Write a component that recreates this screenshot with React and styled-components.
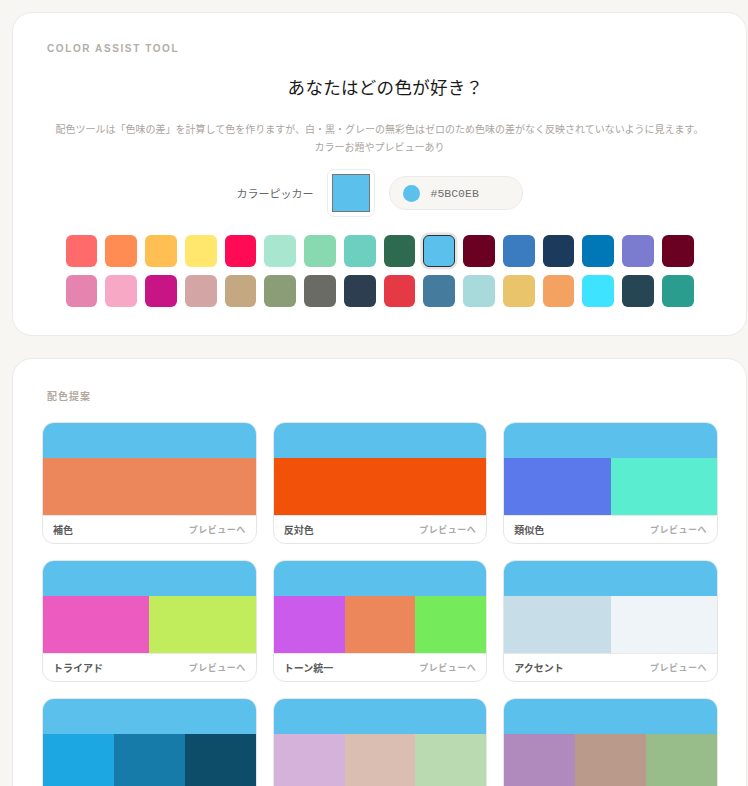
import React from "react";
import styled, { createGlobalStyle } from "styled-components";

const GlobalStyle = createGlobalStyle`
  html, body { margin: 0; padding: 0; background: #f7f6f3; }
  body {
    font-family: "Liberation Sans", "Noto Sans CJK JP", sans-serif;
    color: #333;
    overflow: hidden;
  }
  * { box-sizing: border-box; }
`;

const Page = styled.div`
  display: flex;
  flex-direction: column;
  gap: 22px;
  padding: 12px 1px 12px 12px;
`;

const Card = styled.section`
  background: #fff;
  border: 1px solid #ebeae6;
  border-radius: 20px;
  padding: ${(p) => p.$pad};
`;

const Eyebrow = styled.div`
  font-size: 10px;
  line-height: 12px;
  font-weight: 700;
  letter-spacing: 1.6px;
  color: #b3aea6;
`;

const Title = styled.h1`
  margin: 20px 0 0;
  padding-left: 12px;
  font-size: 17.5px;
  line-height: 24px;
  font-weight: 400;
  letter-spacing: 0.3px;
  text-align: center;
  color: #1a1a1a;
  font-family: "Noto Sans CJK JP", sans-serif;
`;

const Desc = styled.p`
  margin: 21px 0 0;
  font-size: 10px;
  line-height: 18px;
  text-align: center;
  color: #aaa59e;
  font-family: "Noto Sans CJK JP", sans-serif;
`;

const PickerRow = styled.div`
  margin-top: 13px;
  display: flex;
  align-items: center;
  justify-content: center;
  gap: 13px;
`;

const PickerLabel = styled.span`
  font-size: 11px;
  color: #666;
  font-family: "Noto Sans CJK JP", sans-serif;
`;

const PickerBox = styled.div`
  width: 48px;
  height: 48px;
  border: 1px solid #ececec;
  border-radius: 7px;
  padding: 4px;
  display: flex;
`;

const PickerFill = styled.div`
  flex: 1;
  background: ${(p) => p.$c};
  border: 1px solid #767676;
`;

const HexPill = styled.div`
  margin-left: 1px;
  width: 134px;
  height: 34px;
  border-radius: 17px;
  background: #f7f6f3;
  border: 1px solid #ecebe7;
  display: flex;
  align-items: center;
  gap: 11px;
  padding-left: 13px;
`;

const Dot = styled.span`
  width: 17px;
  height: 17px;
  border-radius: 50%;
  background: ${(p) => p.$c};
`;

const HexText = styled.span`
  font-family: "Liberation Mono", monospace;
  font-size: 11.5px;
  color: #707070;
`;

const SwatchGrid = styled.div`
  margin: 18px auto 0;
  width: 628px;
  display: grid;
  grid-template-columns: repeat(16, 1fr);
  grid-auto-rows: 32px;
  gap: 8px;
`;

const Swatch = styled.div`
  border-radius: 6px;
  background: ${(p) => p.$c};
  ${(p) =>
    p.$selected &&
    `
    border: 1.5px solid #2e2e2e;
    box-shadow: 0 0 0 2.5px #e4e4e4;
  `}
`;

const SectionLabel = styled.div`
  padding-left: 5px;
  font-size: 10px;
  line-height: 12px;
  font-weight: 700;
  letter-spacing: 1px;
  color: #b3a89e;
  font-family: "Noto Sans CJK JP", sans-serif;
`;

const PaletteGrid = styled.div`
  margin-top: 20px;
  display: grid;
  grid-template-columns: repeat(3, 1fr);
  gap: 16px;
`;

const PaletteCard = styled.div`
  border: 1px solid #e6e6e6;
  border-radius: 12px;
  overflow: hidden;
  background: #fff;
`;

const TopStripe = styled.div`
  height: 35px;
  background: ${(p) => p.$c};
`;

const Blocks = styled.div`
  height: 57px;
  display: flex;
`;

const Block = styled.div`
  flex: 1;
  background: ${(p) => p.$c};
`;

const Footer = styled.div`
  height: 28px;
  border-top: 1px solid #e8e8e8;
  display: flex;
  align-items: center;
  justify-content: space-between;
  padding: 0 10px;
  font-family: "Noto Sans CJK JP", sans-serif;
`;

const FooterName = styled.span`
  font-size: 10px;
  font-weight: 700;
  color: #5a5a5a;
`;

const FooterLink = styled.span`
  font-size: 9px;
  font-weight: 700;
  letter-spacing: 0.5px;
  color: #aaa;
`;

const PRIMARY = "#5BC0EB";

const swatches = [
  "#FF6B6B", "#FF8C52", "#FFBF52", "#FFE66D", "#FF0A54", "#A8E6CF", "#88D8B0", "#6DCFBF",
  "#2D6A4F", "#5BC0EB", "#6A0022", "#3A7CBF", "#1B3A5C", "#0077B6", "#7B7BD0", "#6A0022",
  "#E584AF", "#F7A8C4", "#C71585", "#D4A5A5", "#C4A882", "#8B9D77", "#6B6B66", "#2C3E50",
  "#E63946", "#457B9D", "#A8DADC", "#E9C46A", "#F4A261", "#3DE3FF", "#264653", "#2A9D8F",
];

const palettes = [
  { name: "補色", colors: ["#EB875B"] },
  { name: "反対色", colors: ["#F25109"] },
  { name: "類似色", colors: ["#5B79EB", "#5BEDCF"] },
  { name: "トライアド", colors: ["#EC5BC0", "#C1EC5B"] },
  { name: "トーン統一", colors: ["#CB5BEB", "#EB875B", "#75EB5B"] },
  { name: "アクセント", colors: ["#C7DDE7", "#EEF4F7"] },
  { name: "モノクロ", colors: ["#1DA7E2", "#167BA8", "#0D4D6A"] },
  { name: "パステル", colors: ["#D4B2DA", "#DABEB2", "#BADAB2"] },
  { name: "くすみ", colors: ["#B08ABC", "#BA9A8A", "#98BC8A"] },
];

export default function App() {
  return (
    <>
      <GlobalStyle />
      <Page>
        <Card $pad="30px 34px 28px">
          <Eyebrow>COLOR ASSIST TOOL</Eyebrow>
          <Title>あなたはどの色が好き？</Title>
          <Desc>
            配色ツールは「色味の差」を計算して色を作りますが、白・黒・グレーの無彩色はゼロのため色味の差がなく反映されていないように見えます。
            <br />
            カラーお題やプレビューあり
          </Desc>
          <PickerRow>
            <PickerLabel>カラーピッカー</PickerLabel>
            <PickerBox>
              <PickerFill $c={PRIMARY} />
            </PickerBox>
            <HexPill>
              <Dot $c={PRIMARY} />
              <HexText>#5BC0EB</HexText>
            </HexPill>
          </PickerRow>
          <SwatchGrid>
            {swatches.map((c, i) => (
              <Swatch key={i} $c={c} $selected={i === 9} />
            ))}
          </SwatchGrid>
        </Card>
        <Card $pad="31px 28px 30px 29px">
          <SectionLabel>配色提案</SectionLabel>
          <PaletteGrid>
            {palettes.map((p) => (
              <PaletteCard key={p.name}>
                <TopStripe $c={PRIMARY} />
                <Blocks>
                  {p.colors.map((c, i) => (
                    <Block key={i} $c={c} />
                  ))}
                </Blocks>
                <Footer>
                  <FooterName>{p.name}</FooterName>
                  <FooterLink>プレビューへ</FooterLink>
                </Footer>
              </PaletteCard>
            ))}
          </PaletteGrid>
        </Card>
      </Page>
    </>
  );
}
